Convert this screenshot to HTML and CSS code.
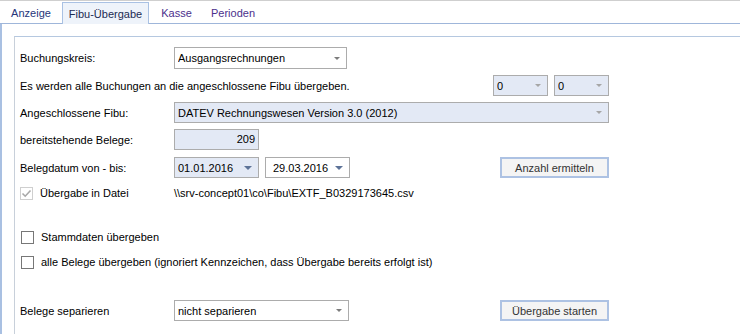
FILE: index.html
```html
<html>
<head>
  <link rel="stylesheet" href="styles.css">
</head>
<body>
  <div class="tabs">
    <span class="tab tab-a">Anzeige</span>
    <span class="tab tab-b active">Fibu-Übergabe</span>
    <span class="tab tab-c">Kasse</span>
    <span class="tab tab-d">Perioden</span>
  </div>
  <div class="page">
    <div class="panel">
      <div class="row row-1">
        <span class="label">Buchungskreis:</span>
        <div class="combo w-kreis">
          <span class="value">Ausgangsrechnungen</span>
          <span class="arrow"></span>
        </div>
      </div>
      <div class="row row-2">
        <span class="info">Es werden alle Buchungen an die angeschlossene Fibu übergeben.</span>
        <div class="combo combo-off w-small">
          <span class="value">0</span>
          <span class="arrow"></span>
        </div>
        <div class="combo combo-off w-small gap-small">
          <span class="value">0</span>
          <span class="arrow"></span>
        </div>
      </div>
      <div class="row row-3">
        <span class="label">Angeschlossene Fibu:</span>
        <div class="combo combo-off w-fibu">
          <span class="value">DATEV Rechnungswesen Version 3.0 (2012)</span>
          <span class="arrow"></span>
        </div>
      </div>
      <div class="row row-4">
        <span class="label">bereitstehende Belege:</span>
        <div class="number">209</div>
      </div>
      <div class="row row-5">
        <span class="label">Belegdatum von - bis:</span>
        <div class="combo combo-off w-date">
          <span class="value">01.01.2016</span>
          <span class="arrow arrow-date"></span>
        </div>
        <div class="combo w-date date-2">
          <span class="value">29.03.2016</span>
          <span class="arrow arrow-date"></span>
        </div>
        <button class="btn btn-count">Anzahl ermitteln</button>
      </div>
      <div class="row row-6">
        <span class="label check-label">
          <span class="box box-off">
            <svg width="11" height="11" viewBox="0 0 11 11"><path d="M1.5 5.5 L4.2 8.2 L9.5 2.5" fill="none" stroke="#a8a8a8" stroke-width="1.6"/></svg>
          </span>
          <span>Übergabe in Datei</span>
        </span>
        <span class="path">\\srv-concept01\co\Fibu\EXTF_B0329173645.csv</span>
      </div>
      <div class="row row-7 check-row">
        <span class="box"></span>
        <span>Stammdaten übergeben</span>
      </div>
      <div class="row row-8 check-row">
        <span class="box"></span>
        <span>alle Belege übergeben (ignoriert Kennzeichen, dass Übergabe bereits erfolgt ist)</span>
      </div>
      <div class="row row-9">
        <span class="label">Belege separieren</span>
        <div class="combo w-sep">
          <span class="value">nicht separieren</span>
          <span class="arrow"></span>
        </div>
        <button class="btn btn-start">Übergabe starten</button>
      </div>
    </div>
  </div>
</body>
</html>
```

FILE: styles.css
```css
body {
  margin: 0;
  font-family: "Liberation Sans", Arial, sans-serif;
  font-size: 11px;
  color: #000;
  background: #fff;
  border-top: 1px solid #cfcfcf;
  overflow: hidden;
}

/* tab strip */
.tabs {
  display: flex;
  gap: 2px;
  height: 21px;
  padding: 1px 0 0 2px;
  border-bottom: 1px solid #9fb6da;
}

.tab {
  display: flex;
  align-items: center;
  justify-content: center;
  box-sizing: border-box;
  height: 21px;
  color: #4b2f8c;
}

.tab-a { width: 58px; color: #26357a; }
.tab-b { width: 87px; }
.tab-c { width: 51px; }
.tab-d { width: 58px; }

.tab.active {
  height: 22px;
  margin-bottom: -1px;
  background: #eef3fa;
  border: 1px solid #a9c1e3;
  border-bottom: none;
  color: #1c2a52;
}

/* page body */
.page {
  box-sizing: border-box;
  height: 310px;
  padding: 12px 0 0 12px;
  border-left: 2px solid #a9c0e2;
}

.panel {
  box-sizing: border-box;
  height: 100%;
  padding: 10px 0 0 5px;
  border-top: 1px solid #b5c8e0;
  border-left: 1px solid #c8d0da;
}

.row {
  display: flex;
  align-items: center;
  height: 21px;
}

.row-1 { height: 22px; }
.row-2 { margin-top: 6px; }
.row-3 { margin-top: 6px; }
.row-4 { margin-top: 6px; }
.row-5 { margin-top: 7px; }
.row-6 { margin-top: 5px; height: 20px; }
.row-7 { margin-top: 26px; height: 16px; }
.row-8 { margin-top: 9px; height: 16px; }
.row-9 { margin-top: 30px; }

.label {
  width: 154px;
  flex-shrink: 0;
}

.info {
  width: 473px;
  flex-shrink: 0;
}

/* combo boxes */
.combo {
  display: flex;
  align-items: center;
  box-sizing: border-box;
  height: 21px;
  padding: 0 6px 0 3px;
  background: #fff;
  border: 1px solid #acacac;
  flex-shrink: 0;
}

.row-1 .combo { height: 22px; }

.combo-off {
  background: #e3e9f5;
}

.combo .value {
  flex: 1;
  white-space: nowrap;
  overflow: hidden;
}

.arrow {
  width: 0;
  height: 0;
  border-left: 3px solid transparent;
  border-right: 3px solid transparent;
  border-top: 3px solid #7c7c7c;
}

.combo-off .arrow {
  border-top-color: #a6a6a6;
}

.arrow-date,
.combo-off .arrow-date {
  border-left-width: 4px;
  border-right-width: 4px;
  border-top: 4px solid #5d7398;
}

.w-kreis { width: 173px; }
.w-small { width: 55px; }
.gap-small { margin-left: 6px; }
.w-fibu { width: 435px; }
.w-date { width: 85px; }
.w-sep { width: 175px; }

.date-2 {
  margin-left: 6px;
  padding-left: 7px;
}

.number {
  box-sizing: border-box;
  width: 85px;
  height: 21px;
  padding-right: 3px;
  line-height: 19px;
  text-align: right;
  background: #e3e9f5;
  border: 1px solid #acacac;
}

/* buttons */
.btn {
  box-sizing: border-box;
  width: 109px;
  height: 21px;
  padding: 0;
  font-family: inherit;
  font-size: 11px;
  color: #333;
  background: #f4f4f4;
  border: 2px solid #adc2e3;
}

.btn-count { margin-left: 150px; }
.btn-start { margin-left: 151px; }

/* check boxes */
.check-label {
  display: flex;
  align-items: center;
  gap: 7px;
}

.check-row {
  gap: 7px;
  padding-left: 1px;
}

.box {
  display: flex;
  align-items: center;
  justify-content: center;
  box-sizing: border-box;
  width: 13px;
  height: 13px;
  border: 1px solid #777;
  background: #fff;
  flex-shrink: 0;
}

.box-off {
  border-color: #cfcfcf;
}

.path {
  white-space: nowrap;
}
```
